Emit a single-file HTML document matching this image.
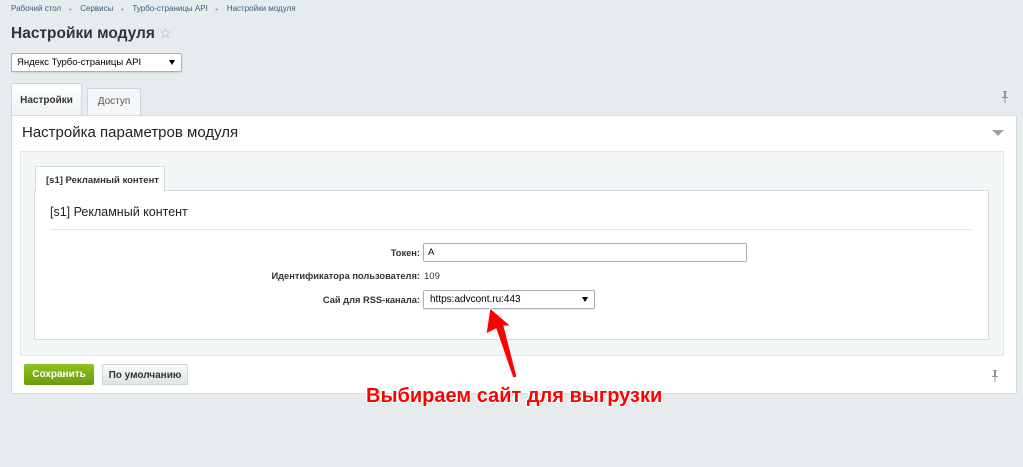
<!DOCTYPE html>
<html><head><meta charset="utf-8"><style>
*{margin:0;padding:0;box-sizing:border-box}
body{width:1023px;height:467px;background:#e6ecee;font-family:"Liberation Sans",Arial,sans-serif;position:relative;overflow:hidden;color:#000}
.a{position:absolute}
.bc{top:4px;left:11px;font-size:8px;color:#3e5c77}
.bc i{font-style:normal;color:#a0a8ae;margin:0 8px;font-size:6px}
h1{position:absolute;left:11px;top:25px;font-size:15.5px;font-weight:bold;color:#333}
.sel{border:1px solid #a8b0b4;border-radius:2px;background:#fff;font-size:9.5px;box-shadow:0 1px 1px rgba(0,0,0,.1)}
.car{position:absolute;right:6px;top:6px;width:0;height:0;border-left:3px solid transparent;border-right:3px solid transparent;border-top:5px solid #000}
.tab{border:1px solid #d0d7da;border-bottom:none;border-radius:2px 2px 0 0;font-size:10px;font-weight:bold;text-align:center}
.pin{position:absolute;width:8px;height:12px}
</style></head><body>
<div class="a bc">Рабочий стол<i>▸</i>Сервисы<i>▸</i>Турбо-страницы API<i>▸</i>Настройки модуля</div>
<h1>Настройки модуля <span style="color:#aab2b8;font-weight:normal;font-size:14px">☆</span></h1>
<div class="a sel" style="left:11px;top:53px;width:171px;height:19px;padding:3px 5px">Яндекс Турбо-страницы API<span class="car"></span></div>
<div class="a tab" style="left:11px;top:83px;width:71px;height:33px;background:linear-gradient(#fff,#eef2f3);padding-top:11px;color:#333">Настройки</div>
<div class="a tab" style="left:87px;top:88px;width:54px;height:27px;background:#f5f7f8;padding-top:7px;color:#555;font-weight:normal">Доступ</div>
<svg class="pin" style="left:1001px;top:91px" viewBox="0 0 8 12"><path d="M2 0H6V1H5V6H7V7H4.5V12H3.5V7H1V6H3V1H2Z" fill="#8a9499"/></svg>
<div class="a" style="left:11px;top:115px;width:1006px;height:279px;background:#fff;border:1px solid #d5dcdf"></div>
<div class="a" style="left:22px;top:124px;font-size:15px;color:#222">Настройка параметров модуля</div>
<div class="a" style="left:992px;top:130px;width:0;height:0;border-left:6px solid transparent;border-right:6px solid transparent;border-top:6px solid #9aa3a8"></div>
<div class="a" style="left:20px;top:151px;width:984px;height:205px;background:#f3f6f7;border:1px solid #e2e7e9"></div>
<div class="a" style="left:34px;top:190px;width:955px;height:150px;background:#fff;border:1px solid #d5dcdf"></div>
<div class="a" style="left:35px;top:166px;width:130px;height:26px;background:#fff;border:1px solid #d5dcdf;border-bottom:none;font-size:9.5px;font-weight:bold;padding:8px 0 0 10px;color:#333">[s1] Рекламный контент</div>
<div class="a" style="left:50px;top:205px;font-size:12.5px;color:#222">[s1] Рекламный контент</div>
<div class="a" style="left:50px;top:229px;width:922px;height:1px;background:#e0e5e7"></div>
<div class="a" style="right:603px;top:248px;font-size:9.3px;font-weight:bold;color:#333">Токен:</div>
<div class="a sel" style="left:423px;top:243px;width:324px;height:19px;padding:3px 4px;box-shadow:none">A</div>
<div class="a" style="right:603px;top:271px;font-size:9.3px;font-weight:bold;color:#333">Идентификатора пользователя:</div>
<div class="a" style="left:424px;top:271px;font-size:9.5px;color:#333">109</div>
<div class="a" style="right:603px;top:295px;font-size:9.3px;font-weight:bold;color:#333">Сай для RSS-канала:</div>
<div class="a sel" style="left:423px;top:290px;width:172px;height:19px;padding:3px 6px;font-size:10px">https:advcont.ru:443<span class="car"></span></div>
<div class="a" style="left:24px;top:364px;width:70px;height:21px;border-radius:2px;background:linear-gradient(#8fc31f,#6a9a0c);color:#fff;font-size:10px;font-weight:bold;text-align:center;padding-top:5px">Сохранить</div>
<div class="a" style="left:102px;top:364px;width:86px;height:21px;border-radius:2px;background:linear-gradient(#fafbfb,#dfe4e6);border:1px solid #cdd3d6;color:#333;font-size:10px;font-weight:bold;text-align:center;padding-top:5px">По умолчанию</div>
<svg class="pin" style="left:991px;top:370px" viewBox="0 0 8 12"><path d="M2 0H6V1H5V6H7V7H4.5V12H3.5V7H1V6H3V1H2Z" fill="#8a9499"/></svg>
<svg class="a" style="left:0;top:0" width="1023" height="467"><path d="M490 308 L511 326 L504 326 L517 377 L513 378 L496 329 L486 334 Z" fill="#f00" stroke="#fff" stroke-width="1"/></svg>
<div class="a" style="left:366px;top:385px;font-size:20px;font-weight:bold;color:#f00;text-shadow:1px 1px 0 #fff,-1px -1px 0 #fff,1px -1px 0 #fff,-1px 1px 0 #fff">Выбираем сайт для выгрузки</div>
</body></html>
